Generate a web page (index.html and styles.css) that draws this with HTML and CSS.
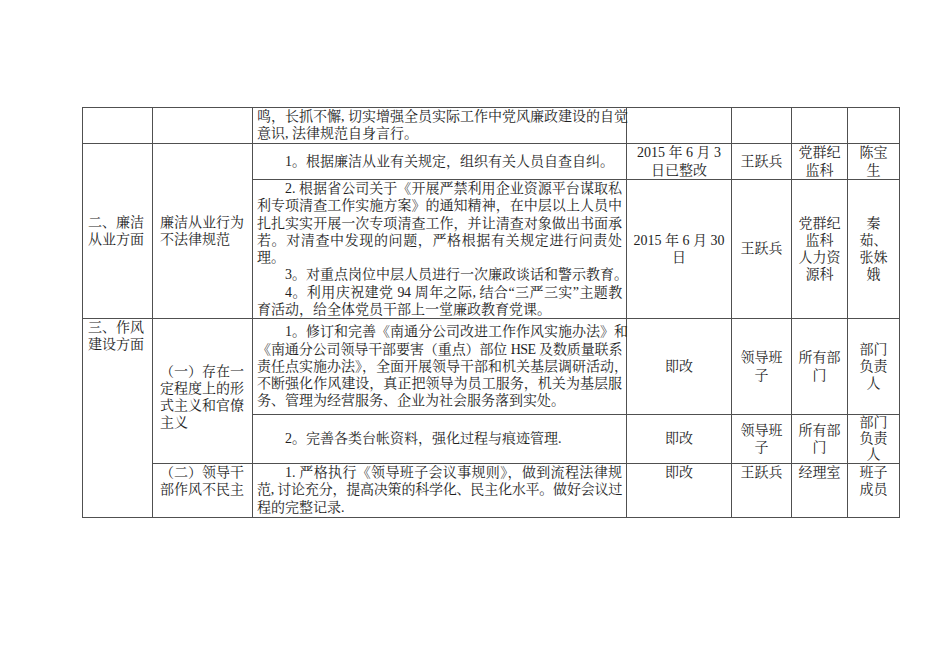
FILE: index.html
```html
<!DOCTYPE html>
<html lang="zh-CN">
<head>
<meta charset="utf-8">
<title>整改表</title>
<link rel="stylesheet" href="styles.css">
</head>
<body>
<div class="page">
<table class="grid">
  <colgroup>
    <col class="w1"><col class="w2"><col class="w3"><col class="w4"><col class="w5"><col class="w6"><col class="w7">
  </colgroup>
  <tr class="r-a">
    <td></td>
    <td></td>
    <td class="txt top"><span class="ln">鸣，长抓不懈, 切实增强全员实际工作中党风廉政建设的自觉</span><span class="ln end">意识, 法律规范自身言行。</span></td>
    <td></td><td></td><td></td><td></td>
  </tr>
  <tr class="r-b1">
    <td rowspan="2" class="l c1">二、廉洁<br>从业方面</td>
    <td rowspan="2" class="l c2">廉洁从业行为<br>不法律规范</td>
    <td class="txt"><span class="ln ind end">1。根据廉洁从业有关规定，组织有关人员自查自纠。</span></td>
    <td class="c">2015 年 6 月 3<br>日已整改</td>
    <td class="c">王跃兵</td>
    <td class="c">党群纪<br>监科</td>
    <td class="c">陈宝<br>生</td>
  </tr>
  <tr class="r-b2">
    <td class="txt"><span class="ln ind">2. 根据省公司关于《开展严禁利用企业资源平台谋取私</span><span class="ln">利专项清查工作实施方案》的通知精神，在中层以上人员中</span><span class="ln">扎扎实实开展一次专项清查工作，并让清查对象做出书面承</span><span class="ln">若。对清查中发现的问题，严格根据有关规定进行问责处</span><span class="ln end">理。</span><span class="ln ind end">3。对重点岗位中层人员进行一次廉政谈话和警示教育。</span><span class="ln ind tight">4。利用庆祝建党 94 周年之际, 结合“三严三实”主题教</span><span class="ln end">育活动，给全体党员干部上一堂廉政教育党课。</span></td>
    <td class="c">2015 年 6 月 30<br>日</td>
    <td class="c">王跃兵</td>
    <td class="c">党群纪<br>监科<br>人力资<br>源科</td>
    <td class="c">秦<br>茹、<br>张姝<br>娥</td>
  </tr>
  <tr class="r-c1">
    <td rowspan="3" class="l c1 top">三、作风<br>建设方面</td>
    <td rowspan="2" class="l c2 low">（一）存在一<br>定程度上的形<br>式主义和官僚<br>主义</td>
    <td class="txt"><span class="ln ind">1。修订和完善《南通分公司改进工作作风实施办法》和</span><span class="ln tight2">《南通分公司领导干部要害（重点）部位 HSE 及数质量联系</span><span class="ln">责任点实施办法》，全面开展领导干部和机关基层调研活动，</span><span class="ln">不断强化作风建设，真正把领导为员工服务，机关为基层服</span><span class="ln end">务、管理为经营服务、企业为社会服务落到实处。</span></td>
    <td class="c">即改</td>
    <td class="c">领导班<br>子</td>
    <td class="c">所有部<br>门</td>
    <td class="c">部门<br>负责<br>人</td>
  </tr>
  <tr class="r-c2">
    <td class="txt"><span class="ln ind end">2。完善各类台帐资料，强化过程与痕迹管理.</span></td>
    <td class="c">即改</td>
    <td class="c">领导班<br>子</td>
    <td class="c">所有部<br>门</td>
    <td class="c squeeze">部门<br>负责<br>人</td>
  </tr>
  <tr class="r-d">
    <td class="l c2 top">（二）领导干<br>部作风不民主</td>
    <td class="txt top"><span class="ln ind">1. 严格执行《领导班子会议事规则》，做到流程法律规</span><span class="ln tight">范, 讨论充分，提高决策的科学化、民主化水平。做好会议过</span><span class="ln end">程的完整记录.</span></td>
    <td class="c top">即改</td>
    <td class="c top">王跃兵</td>
    <td class="c top">经理室</td>
    <td class="c top">班子<br>成员</td>
  </tr>
</table>
</div>
</body>
</html>
```

FILE: styles.css
```css
html, body {
  margin: 0;
  padding: 0;
  background: #ffffff;
}

body {
  font-family: "Liberation Serif", "Noto Serif CJK SC", "Noto Sans CJK SC", serif;
  font-size: 14px;
  line-height: 17.25px;
  color: #1e1e1e;
}

.page {
  padding: 107px 0 0 82px;
}

.grid {
  border-collapse: collapse;
  table-layout: fixed;
  width: 817px;
}

.w1 { width: 70px; }
.w2 { width: 100px; }
.w3 { width: 374px; }
.w4 { width: 105px; }
.w5 { width: 60px; }
.w6 { width: 56px; }
.w7 { width: 52px; }

.grid td {
  border: 1px solid #505050;
  padding: 0 4px;
  vertical-align: middle;
  overflow: visible;
}

.r-a { height: 36px; }
.r-b1 { height: 36px; }
.r-b2 { height: 139px; }
.r-c1 { height: 96px; }
.r-c2 { height: 49px; }
.r-d { height: 54px; }

.grid td.top { vertical-align: top; }

.grid td.c { text-align: center; }

.grid td.l { text-align: left; }
.grid td.c1 { padding-left: 5px; }
.grid td.c2 { padding-left: 7px; padding-right: 2px; }
.grid td.low { padding-top: 12px; }

.txt {
  text-align: justify;
}

.ln {
  display: block;
  white-space: nowrap;
  text-align: justify;
  text-align-last: justify;
}

.ln.end {
  text-align-last: left;
}

.ln.ind {
  text-indent: 2em;
}

.ln.tight { letter-spacing: -0.3px; }
.ln.tight2 { letter-spacing: -0.5px; }

.grid td.squeeze {
  line-height: 16px;
}
```
